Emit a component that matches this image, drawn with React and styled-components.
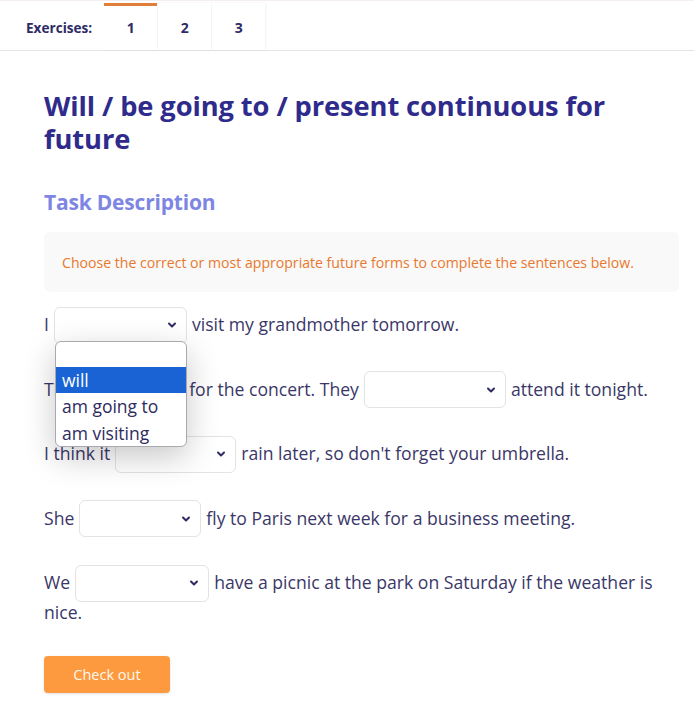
import React from "react";
import styled, { createGlobalStyle } from "styled-components";

const GlobalStyle = createGlobalStyle`
  html, body { margin: 0; padding: 0; background: #ffffff; }
  body { font-family: "Open Sans", "Noto Sans", sans-serif; color: #3a3768; }
  * { box-sizing: border-box; }
`;

const Header = styled.header`
  height: 51px;
  display: flex;
  align-items: flex-end;
  padding-left: 26px;
  border-top: 1px solid #f4eef4;
  border-bottom: 1px solid #e4e4e4;
`;

const Label = styled.span`
  font-size: 13.6px;
  font-weight: 700;
  color: #2e2b66;
  align-self: center;
  margin-right: 12px;
  margin-top: 4px;
`;

const Tabs = styled.nav`
  display: flex;
  gap: 1px;
`;

const Tab = styled.button`
  width: 53px;
  height: 47px;
  border: none;
  border-top: 3px solid ${(p) => (p.$active ? "#e27d3a" : "transparent")};
  background: #fff;
  box-shadow: 1px 0 2px rgba(0, 0, 0, 0.06);
  font-family: inherit;
  font-size: 14px;
  font-weight: 700;
  color: #2e2b66;
  padding: 0;
  padding-bottom: 1px;
`;

const Main = styled.main`
  padding: 38px 15px 30px 44px;
`;

const Title = styled.h1`
  margin: 0;
  font-size: 27.3px;
  line-height: 33px;
  font-weight: 700;
  color: #2f2b8c;
  letter-spacing: -0.1px;
`;

const SubTitle = styled.h2`
  margin: 33px 0 0;
  font-size: 21px;
  line-height: 28px;
  font-weight: 700;
  color: #7e86e4;
  letter-spacing: -0.2px;
`;

const Description = styled.div`
  margin-top: 16px;
  height: 60px;
  background: #f9f9f9;
  border-radius: 6px;
  padding: 0 18px;
  display: flex;
  align-items: center;
  font-size: 14.1px;
  color: #e8782d;
  white-space: nowrap;
`;

const Sentences = styled.div`
  margin-top: 17px;
  display: flex;
  flex-direction: column;
  gap: 34.5px;
`;

const Row = styled.p`
  margin: 0;
  font-size: 17.6px;
  line-height: 30px;
  color: #3a3768;
`;

const SelectWrap = styled.span`
  position: relative;
  display: inline-block;
  vertical-align: middle;
  margin: -7px 5px -5px;
  width: ${(p) => p.$w}px;
  height: 37px;
`;

const NativeSelect = styled.select`
  appearance: none;
  -webkit-appearance: none;
  display: block;
  width: 100%;
  height: 100%;
  border: 1px solid #e3e3e3;
  border-radius: 6px;
  background: #fff;
  font-family: inherit;
  font-size: 16px;
  color: #3a3768;
  padding: 0 28px 0 8px;
  outline: none;
`;

const Chevron = styled.svg`
  position: absolute;
  right: 10px;
  top: 50%;
  width: 10px;
  height: 10px;
  margin-top: -5px;
  pointer-events: none;
`;

const Popup = styled.ul`
  position: absolute;
  top: 34px;
  left: 1px;
  width: 132px;
  margin: 0;
  padding: 1px 0 0;
  list-style: none;
  background: #fff;
  border: 1px solid #a9a9b0;
  border-radius: 6px;
  box-shadow: 0 10px 32px rgba(0, 0, 0, 0.22);
  overflow: hidden;
  z-index: 5;
`;

const Option = styled.li`
  height: ${(p) => (p.$empty ? 24 : 26.5)}px;
  line-height: 26px;
  padding-left: 6px;
  font-size: 17.5px;
  color: ${(p) => (p.$selected ? "#ffffff" : "#2e2b5e")};
  background: ${(p) => (p.$selected ? "#1a63d4" : "transparent")};
  white-space: nowrap;
`;

const Button = styled.button`
  display: block;
  margin-top: 29px;
  width: 126px;
  height: 37px;
  border: none;
  border-radius: 4px;
  background: #fd9a3f;
  color: #fff8ee;
  font-family: inherit;
  font-size: 14.5px;
  box-shadow: 0 1px 3px rgba(0, 0, 0, 0.12);
`;

function Select({ width, open }) {
  return (
    <SelectWrap $w={width}>
      <NativeSelect defaultValue="">
        <option value=""></option>
        <option value="will">will</option>
        <option value="going">am going to</option>
        <option value="visiting">am visiting</option>
      </NativeSelect>
      <Chevron viewBox="0 0 10 10">
        <path d="M2 3.5 L5 6.5 L8 3.5" fill="none" stroke="#2e2b66" strokeWidth="2" strokeLinecap="round" strokeLinejoin="round" />
      </Chevron>
      {open && (
        <Popup>
          <Option $empty />
          <Option $selected>will</Option>
          <Option>am going to</Option>
          <Option>am visiting</Option>
        </Popup>
      )}
    </SelectWrap>
  );
}

export default function App() {
  return (
    <>
      <GlobalStyle />
      <Header>
        <Label>Exercises:</Label>
        <Tabs>
          <Tab $active>1</Tab>
          <Tab>2</Tab>
          <Tab>3</Tab>
        </Tabs>
      </Header>
      <Main>
        <Title>Will / be going to / present continuous for future</Title>
        <SubTitle>Task Description</SubTitle>
        <Description>
          Choose the correct or most appropriate future forms to complete the sentences below.
        </Description>
        <Sentences>
          <Row>
            I<Select width={133} open />visit my grandmother tomorrow.
          </Row>
          <Row>
            They<Select width={96} />for the concert. They<Select width={142} />attend it tonight.
          </Row>
          <Row>
            I think it<Select width={121} />rain later, so don't forget your umbrella.
          </Row>
          <Row>
            She<Select width={122} />fly to Paris next week for a business meeting.
          </Row>
          <Row>
            We<Select width={134} />have a picnic at the park on Saturday if the weather is nice.
          </Row>
        </Sentences>
        <Button>Check out</Button>
      </Main>
    </>
  );
}
